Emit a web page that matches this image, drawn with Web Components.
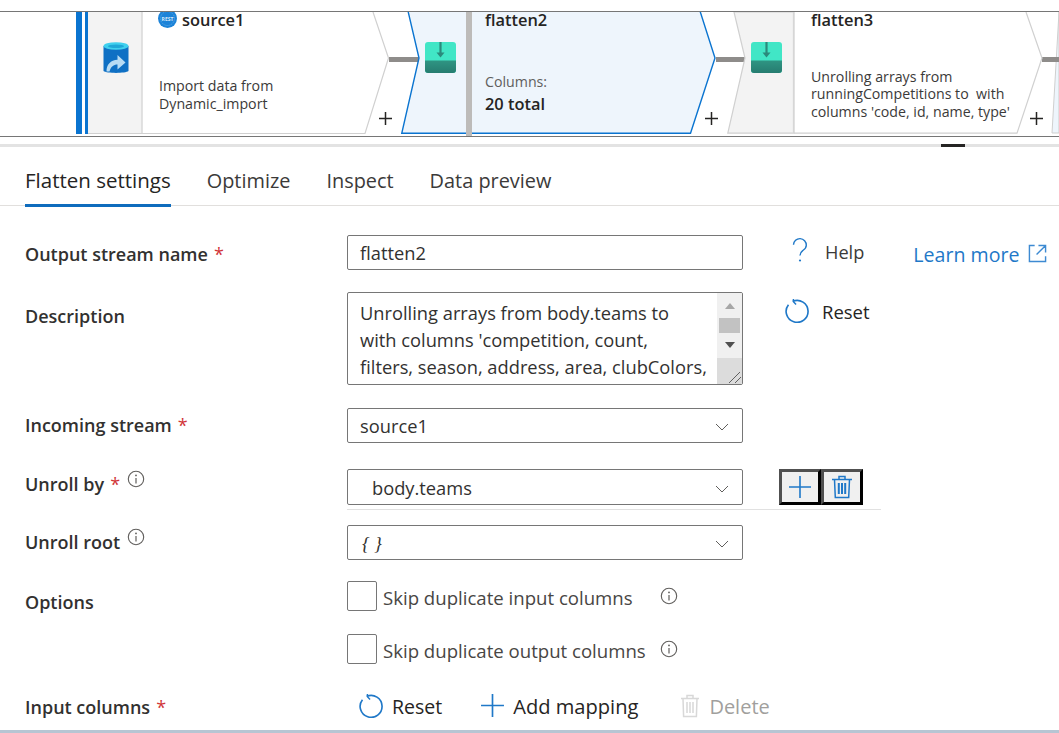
<!DOCTYPE html>
<html lang="en">
<head>
<meta charset="utf-8">
<title>Flatten settings</title>
<style>
  html, body { margin: 0; padding: 0; background: #fff; }
  body {
    width: 1059px;
    height: 733px;
    overflow: hidden;
    font-family: 'Open Sans', 'Noto Sans', sans-serif;
    color: #323130;
  }
</style>
</head>
<body>
  <flow-graph>
    <flow-node kind="source" title="source1" style="left:76px;width:344px;--body-bottom:24px">
      <span>Import data from<br>Dynamic_import</span>
    </flow-node>
    <flow-node kind="selected" title="flatten2" style="left:401px;width:316px;--body-bottom:21px">
      <span style="display:block;color:#605e5c">Columns:</span>
      <b style="display:block;margin-top:3px;font-size:16.4px;line-height:22px;font-weight:600;color:#252423">20 total</b>
    </flow-node>
    <flow-node kind="plain" title="flatten3" style="left:727px;width:316px;--body-bottom:16px">
      <span>Unrolling arrays from<br>runningCompetitions to&nbsp; with<br>columns 'code, id, name, type'</span>
    </flow-node>
  </flow-graph>

  <panel-split></panel-split>

  <tab-bar>
    <tab-item active>Flatten settings</tab-item>
    <tab-item>Optimize</tab-item>
    <tab-item>Inspect</tab-item>
    <tab-item>Data preview</tab-item>
  </tab-bar>

  <form-row label="Output stream name" required style="--top:29px;--h:35px;--label-top:6px">
    <text-box>flatten2</text-box>
    <div slot="side" style="display:flex;align-items:center;margin:0 0 0 44px;white-space:nowrap">
      <ui-icon name="help" style="--s:26px;margin-top:-3px"></ui-icon>
      <span style="margin-left:12px;font-size:18.2px;color:#3b3a39">Help</span>
      <a style="margin:6px 0 0 49px;font-size:19.6px;color:#1f78c8">Learn more</a>
      <ui-icon name="external" style="--s:19px;margin:4px 0 0 8px"></ui-icon>
    </div>
  </form-row>

  <form-row label="Description" style="--top:22px;--h:93px;--label-top:11px">
    <text-area-box>Unrolling arrays from body.teams to<br>with columns 'competition, count,<br>filters, season, address, area, clubColors,</text-area-box>
    <div slot="side" style="margin:5px 0 0 42px">
      <action-button icon="reset" gap="12" style="font-size:18.500px">Reset</action-button>
    </div>
  </form-row>

  <form-row label="Incoming stream" required style="--top:23px;--h:35px;--label-top:4px">
    <select-box>source1</select-box>
  </form-row>

  <form-row label="Unroll by" required info style="--top:26px;--h:35px;--label-top:2px">
    <select-box indent>body.teams</select-box>
    <div slot="side" style="display:flex;margin-left:36px">
      <bevel-button icon="plus"></bevel-button>
      <bevel-button icon="trash"></bevel-button>
    </div>
  </form-row>

  <row-rule></row-rule>

  <form-row label="Unroll root" info style="--top:15px;--h:35px;--label-top:4px">
    <select-box><i style="font-family:'Liberation Serif',serif;font-size:19px;margin-left:2px">{ }</i></select-box>
  </form-row>

  <form-row label="Options" style="--top:21px;--h:31px;--label-top:8px">
    <check-box>Skip duplicate input columns</check-box>
  </form-row>

  <form-row style="--top:22px;--h:31px">
    <check-box>Skip duplicate output columns</check-box>
  </form-row>

  <form-row label="Input columns" required style="--top:26px;--h:32px">
    <div style="display:flex;align-items:center;margin:0 0 0 12px">
      <action-button icon="reset" gap="8">Reset</action-button>
      <action-button icon="plus" gap="8" style="margin-left:38px;font-size:20.100px">Add mapping</action-button>
      <action-button icon="trash-off" gap="9" disabled style="margin-left:42px;font-size:20px">Delete</action-button>
    </div>
  </form-row>

  <panel-foot></panel-foot>

<script>
const ICONS = {
  help: `<svg viewBox="0 0 26 26"><path d="M6.500 7.800a6.400 6.400 0 0 1 12.800.5c0 3-1.800 4-3.600 5.300-1.800 1.300-2.700 2.400-2.700 5" fill="none" stroke="#1f78c8" stroke-width="1.400"/><circle cx="13" cy="23.500" r="1.100" fill="#1f78c8"/></svg>`,
  external: `<svg viewBox="0 0 20 20"><path d="M7 1.500H1.500v17h17V13M11 1.500h7.500V9M18 2 9 11" fill="none" stroke="#3d8ad2" stroke-width="1.500"/></svg>`,
  reset: `<svg viewBox="0 0 26 26"><path d="M8.200 3.400a11.400 11.400 0 1 1-4.600 3.500" fill="none" stroke="#1f78c8" stroke-width="1.700"/><path d="M8.800 1 8.600 3.700l2.900 3" fill="none" stroke="#1f78c8" stroke-width="1.500"/></svg>`,
  plus: `<svg viewBox="0 0 24 24"><path d="M12 1v22M1 12h22" fill="none" stroke="#1f78c8" stroke-width="1.600"/></svg>`,
  trash: `<svg viewBox="0 0 20 24"><path d="M0 4.500h20M7 4.500V1.500h6v3M2.500 4.500l.8 18h13.400l.8-18" fill="none" stroke="#1f78c8" stroke-width="1.500"/><path d="M6.800 8v11M10 8v11M13.200 8v11" stroke="#1f78c8" stroke-width="2"/></svg>`,
  'trash-off': `<svg viewBox="0 0 20 24"><path d="M1 4.500h18M7 4.500V1.500h6v3M3 4.500l.6 18h12.800l.6-18" fill="none" stroke="#d8d8d8" stroke-width="1.500"/><path d="M7 8v11M10 8v11M13 8v11" stroke="#d8d8d8" stroke-width="1.500"/></svg>`,
  info: `<svg viewBox="0 0 18 18"><circle cx="9" cy="9" r="7.700" fill="none" stroke="#605e5c" stroke-width="1.100"/><circle cx="9" cy="5.400" r=".9" fill="#605e5c"/><path d="M9 8v5.400" stroke="#605e5c" stroke-width="1.200"/></svg>`,
  chevron: `<svg viewBox="0 0 14 8"><path d="M1 1l6 6 6-6" fill="none" stroke="#605e5c" stroke-width="1"/></svg>`
};

class UiIcon extends HTMLElement {
  constructor() {
    super();
    this.attachShadow({ mode: 'open' });
  }
  connectedCallback() {
    this.shadowRoot.innerHTML = `
      <style>
        :host { display: inline-flex; flex: none; width: var(--s, 24px); height: var(--s, 24px); }
        svg { width: 100%; height: 100%; display: block; }
      </style>
      ${ICONS[this.getAttribute('name')] || ''}`;
  }
}
customElements.define('ui-icon', UiIcon);

class FlowGraph extends HTMLElement {
  constructor() {
    super();
    const shadow = this.attachShadow({ mode: 'open' });
    shadow.innerHTML = `
      <style>
        :host {
          display: block;
          position: relative;
          box-sizing: border-box;
          height: 126px;
          margin-top: 11px;
          border-top: 1px solid #767676;
          border-bottom: 1px solid #767676;
          background: #fff;
        }
        svg { position: absolute; left: 0; top: 0; }
      </style>
      <svg width="1059" height="124" viewBox="0 12 1059 124">
        <path d="M1059 12 1052 133H1059Z" fill="#eef5fc" stroke="#cfcfcf"/>
        <rect x="389" y="57" width="30" height="5" fill="#8e8c8a"/>
        <rect x="716" y="57" width="29" height="5" fill="#8e8c8a"/>
        <rect x="1042" y="57" width="17" height="5" fill="#8e8c8a"/>
      </svg>
      <slot></slot>`;
  }
}
customElements.define('flow-graph', FlowGraph);

const FLOW_ICON = `<svg width="31" height="31" viewBox="0 0 31 31">
  <defs><linearGradient id="band" x1="0" y1="0" x2="0" y2="1"><stop offset="0" stop-color="#2f9583"/><stop offset="1" stop-color="#267c70"/></linearGradient></defs>
  <rect width="31" height="31" rx="3" fill="#41e6c6"/>
  <path d="M0 18.500h31V28a3 3 0 0 1-3 3H3a3 3 0 0 1-3-3Z" fill="url(#band)"/>
  <path d="M15.500 0v12" stroke="#2b8a7c" stroke-width="2.200"/>
  <path d="M11.500 10.500h8l-4 5Z" fill="#2b8a7c"/>
</svg>`;
const DB_ICON = `<svg width="26" height="31" viewBox="0 0 26 31">
  <path d="M.5 4v25c3 2.500 22 2.500 25 0V4Z" fill="#0f70c4"/>
  <ellipse cx="13" cy="4" rx="12.500" ry="3.800" fill="#3fd0ee"/>
  <ellipse cx="13" cy="4.300" rx="8" ry="1.800" fill="#1ea8d8"/>
  <path d="M3.500 29.500c0-7 4-11.500 11-11.800V13l8 7.500-8 7v-5c-4 0-6.500 2-8 7Z" fill="#b8dcf4"/>
</svg>`;
// the badge sits under the canvas edge, so only its lower part is drawn
const REST_ICON = `<svg width="19" height="16" viewBox="0 3 19 16">
  <circle cx="9.500" cy="9.500" r="9.500" fill="#1c83d8"/>
  <circle cx="9.500" cy="9.500" r="7" fill="none" stroke="#6db3e8" stroke-width=".8" stroke-dasharray="1 1"/>
  <text x="9.500" y="11.500" font-size="5" font-weight="700" text-anchor="middle" fill="#d5e9f9" font-family="Open Sans, sans-serif">REST</text>
</svg>`;

class FlowNode extends HTMLElement {
  constructor() {
    super();
    this.attachShadow({ mode: 'open' });
  }
  connectedCallback() {
    const kind = this.getAttribute('kind');
    const title = this.getAttribute('title');
    const w = parseInt(this.style.width);
    // outline in node coordinates, canvas top is 0 and node bottom is 121
    let shape;
    if (kind === 'source') {
      shape = `
        <rect x="0" y="0" width="6" height="122" fill="#0a74d0"/>
        <rect x="9" y="0" width="3" height="122" fill="#0a74d0"/>
        <rect x="12" y="0" width="54" height="121" fill="#f3f3f3"/>
        <path d="M66 0v121.500" stroke="#d9d9d9" stroke-width="1.500"/>
        <path d="M12 121.500H289L312.500 46 297 0" fill="none" stroke="#d0d0d0" stroke-width="1.200"/>`;
    } else if (kind === 'selected') {
      shape = `
        <path d="M7 -1 18 46 .8 121.200H289.500L314 46 299 -1Z" fill="#eef5fc" stroke="#0a74d0" stroke-width="1.400"/>
        <rect x="65" y="-1" width="6" height="126" fill="#bdbbb9"/>`;
    } else {
      shape = `
        <path d="M7 0 18 46 .8 121.200H66.500V0Z" fill="#f3f3f3" stroke="#d0d0d0" stroke-width="1.200"/>
        <path d="M67 0v121.500" stroke="#d9d9d9" stroke-width="1.500"/>
        <path d="M67 121.200H290L315 46 299 0" fill="none" stroke="#d0d0d0" stroke-width="1.200"/>`;
    }
    const left = { source: 82, selected: 84, plain: 84 }[kind];
    const iconLeft = { source: 27, selected: 24, plain: 24 }[kind];
    const plus = { source: 303, selected: 304, plain: 303 }[kind];
    this.shadowRoot.innerHTML = `
      <style>
        :host {
          display: block;
          position: absolute;
          top: 0;
          height: 124px;
          font-size: 14.200px;
          line-height: 17.500px;
          color: #3b3a39;
        }
        svg.shape { position: absolute; left: 0; top: 0; }
        .icon { position: absolute; left: ${iconLeft}px; top: 30px; display: flex; }
        .title {
          position: absolute;
          left: ${left}px;
          top: 0;
          display: flex;
          align-items: flex-start;
          gap: 5px;
          font-size: 16.400px;
          line-height: 16px;
          font-weight: 600;
          color: #252423;
        }
        .title svg { display: block; }
        .body {
          position: absolute;
          left: ${kind === 'source' ? 83 : left}px;
          bottom: var(--body-bottom, 21px);
          white-space: nowrap;
        }
        .plus { position: absolute; left: ${plus}px; top: 100px; width: 13px; height: 13px; }
      </style>
      <svg class="shape" width="${w}" height="124">${shape}</svg>
      <div class="icon">${kind === 'source' ? DB_ICON : FLOW_ICON}</div>
      <div class="title">${kind === 'source' ? REST_ICON : ''}<span>${title}</span></div>
      <div class="body"><slot></slot></div>
      <svg class="plus" viewBox="0 0 13 13"><path d="M6.500 0v13M0 6.500h13" stroke="#252423" stroke-width="1.500"/></svg>`;
  }
}
customElements.define('flow-node', FlowNode);

class PanelSplit extends HTMLElement {
  constructor() {
    super();
    this.attachShadow({ mode: 'open' }).innerHTML = `
      <style>
        :host { display: block; height: 3px; margin-top: 7px; background: #e3e3e3; position: relative; }
        div { position: absolute; left: 941px; top: 0; width: 24px; height: 3px; background: #252423; }
      </style>
      <div></div>`;
  }
}
customElements.define('panel-split', PanelSplit);

class TabBar extends HTMLElement {
  constructor() {
    super();
    this.attachShadow({ mode: 'open' }).innerHTML = `
      <style>
        :host {
          display: flex;
          gap: 36px;
          height: 59px;
          padding-left: 25px;
          border-bottom: 1px solid #e1dfdd;
          box-sizing: border-box;
        }
      </style>
      <slot></slot>`;
  }
}
customElements.define('tab-bar', TabBar);

class TabItem extends HTMLElement {
  constructor() {
    super();
    this.attachShadow({ mode: 'open' }).innerHTML = `
      <style>
        :host {
          display: block;
          box-sizing: border-box;
          height: 60px;
          padding-top: 20px;
          font-size: 19.900px;
          line-height: 27px;
          color: #3b3a39;
        }
        :host([active]) { border-bottom: 3px solid #0f6cbd; color: #252423; font-size: 20.500px; }
      </style>
      <slot></slot>`;
  }
}
customElements.define('tab-item', TabItem);

class FormRow extends HTMLElement {
  constructor() {
    super();
    this.attachShadow({ mode: 'open' });
  }
  connectedCallback() {
    const label = this.getAttribute('label') || '';
    const req = this.hasAttribute('required');
    const info = this.hasAttribute('info');
    this.shadowRoot.innerHTML = `
      <style>
        :host {
          display: grid;
          grid-template-columns: 322px 396px auto;
          box-sizing: border-box;
          height: var(--h);
          margin-top: var(--top, 0);
          padding-left: 25px;
        }
        .label {
          display: flex;
          align-items: flex-start;
          margin-top: var(--label-top, 3px);
          font-size: 18px;
          line-height: 26px;
          font-weight: 600;
          color: #323130;
        }
        .req { color: #d13438; margin-left: 6px; font-weight: 400; }
        ui-icon { margin: -1px 0 0 7px; }
        .control { min-width: 0; }
      </style>
      <div class="label">
        <span>${label}</span>
        ${req ? '<span class="req">*</span>' : ''}
        ${info ? '<ui-icon name="info" style="--s:18px"></ui-icon>' : ''}
      </div>
      <div class="control"><slot></slot></div>
      <div class="side"><slot name="side"></slot></div>`;
  }
}
customElements.define('form-row', FormRow);

const BOX_CSS = `
  box-sizing: border-box;
  border: 1px solid #767676;
  border-radius: 2px;
  background: #fff;
  font-size: 18.300px;
  color: #323130;
`;

class TextBox extends HTMLElement {
  constructor() {
    super();
    this.attachShadow({ mode: 'open' }).innerHTML = `
      <style>
        :host { display: flex; align-items: center; height: 100%; padding: 0 12px; ${BOX_CSS} }
      </style>
      <slot></slot>`;
  }
}
customElements.define('text-box', TextBox);

class TextAreaBox extends HTMLElement {
  constructor() {
    super();
    this.attachShadow({ mode: 'open' }).innerHTML = `
      <style>
        :host { display: flex; height: 100%; overflow: hidden; ${BOX_CSS} }
        .text { flex: 1; padding: 6px 0 0 12px; line-height: 27px; height: 91px; overflow: hidden; box-sizing: border-box; white-space: nowrap; }
        .bar { flex: none; width: 25px; display: flex; flex-direction: column; background: #f0f0f0; }
        .arrow { height: 25px; display: flex; align-items: center; justify-content: center; box-sizing: border-box; }
        .up { border: 5px solid transparent; border-top: 0; border-bottom: 6px solid #a6a6a6; }
        .down { border: 5px solid transparent; border-bottom: 0; border-top: 6px solid #505050; }
        .thumb { height: 15px; margin: 0 2px; background: #c2c2c2; }
        .corner { flex: 1; background: #dcdcdc; display: flex; align-items: flex-end; justify-content: flex-end; }
        .corner svg { display: block; }
      </style>
      <div class="text"><slot></slot></div>
      <div class="bar">
        <div class="arrow"><span class="up"></span></div>
        <div class="thumb"></div>
        <div class="arrow" style="padding-bottom:2px"><span class="down"></span></div>
        <div class="corner"><svg width="14" height="14" viewBox="0 0 14 14"><path d="M1 13 12 2M7 13l6-6" stroke="#606060" stroke-width="1"/></svg></div>
      </div>`;
  }
}
customElements.define('text-area-box', TextAreaBox);

class SelectBox extends HTMLElement {
  constructor() {
    super();
    this.attachShadow({ mode: 'open' });
  }
  connectedCallback() {
    const pad = this.hasAttribute('indent') ? 24 : 12;
    this.shadowRoot.innerHTML = `
      <style>
        :host { display: flex; align-items: center; height: 100%; padding: 0 13px 0 ${pad}px; ${BOX_CSS} }
        .v { flex: 1; }
        ui-icon { --s: 14px; height: 8px; margin-top: 3px; }
      </style>
      <span class="v"><slot></slot></span>
      <ui-icon name="chevron"></ui-icon>`;
  }
}
customElements.define('select-box', SelectBox);

class BevelButton extends HTMLElement {
  constructor() {
    super();
    this.attachShadow({ mode: 'open' });
  }
  connectedCallback() {
    const icon = this.getAttribute('icon');
    const size = icon === 'plus' ? '--s:24px' : '--s:20px;height:24px';
    this.shadowRoot.innerHTML = `
      <style>
        :host {
          display: flex;
          align-items: center;
          justify-content: center;
          box-sizing: border-box;
          width: 42px;
          height: 36px;
          background: #f0f0f0;
          border: 3px solid;
          border-color: #505050 #000 #000 #505050;
        }
      </style>
      <ui-icon name="${icon}" style="${size}"></ui-icon>`;
  }
}
customElements.define('bevel-button', BevelButton);

class RowRule extends HTMLElement {
  constructor() {
    super();
    this.attachShadow({ mode: 'open' }).innerHTML = `
      <style>
        :host { display: block; width: 534px; height: 1px; margin: 5px 0 0 347px; background: #e1e1e1; }
      </style>`;
  }
}
customElements.define('row-rule', RowRule);

class CheckBox extends HTMLElement {
  constructor() {
    super();
    this.attachShadow({ mode: 'open' }).innerHTML = `
      <style>
        :host { display: flex; align-items: center; font-size: 18.600px; color: #484644; white-space: nowrap; }
        .box { flex: none; box-sizing: border-box; width: 30px; height: 30px; border: 1px solid #767676; border-radius: 2px; margin-right: 6px; }
        .text { width: 277px; padding-top: 3px; }
        ui-icon { --s: 18px; }
      </style>
      <span class="box"></span>
      <span class="text"><slot></slot></span>
      <ui-icon name="info"></ui-icon>`;
  }
}
customElements.define('check-box', CheckBox);

class ActionButton extends HTMLElement {
  constructor() {
    super();
    this.attachShadow({ mode: 'open' });
  }
  connectedCallback() {
    const off = this.hasAttribute('disabled');
    const icon = this.getAttribute('icon');
    this.shadowRoot.innerHTML = `
      <style>
        :host { display: inline-flex; align-items: center; font-size: 19.500px; color: ${off ? '#a19f9d' : '#252423'}; white-space: nowrap; }
        span { margin-left: ${this.getAttribute('gap') || 8}px; padding-top: 2px; }
      </style>
      <ui-icon name="${icon}" style="${off ? '--s:20px;height:24px' : '--s:25px'}"></ui-icon>
      <span><slot></slot></span>`;
  }
}
customElements.define('action-button', ActionButton);

class PanelFoot extends HTMLElement {
  constructor() {
    super();
    this.attachShadow({ mode: 'open' }).innerHTML = `
      <style>
        :host { position: absolute; left: 0; top: 730px; width: 1059px; height: 3px; background: #b7c5d3; }
      </style>`;
  }
}
customElements.define('panel-foot', PanelFoot);
</script>
</body>
</html>
